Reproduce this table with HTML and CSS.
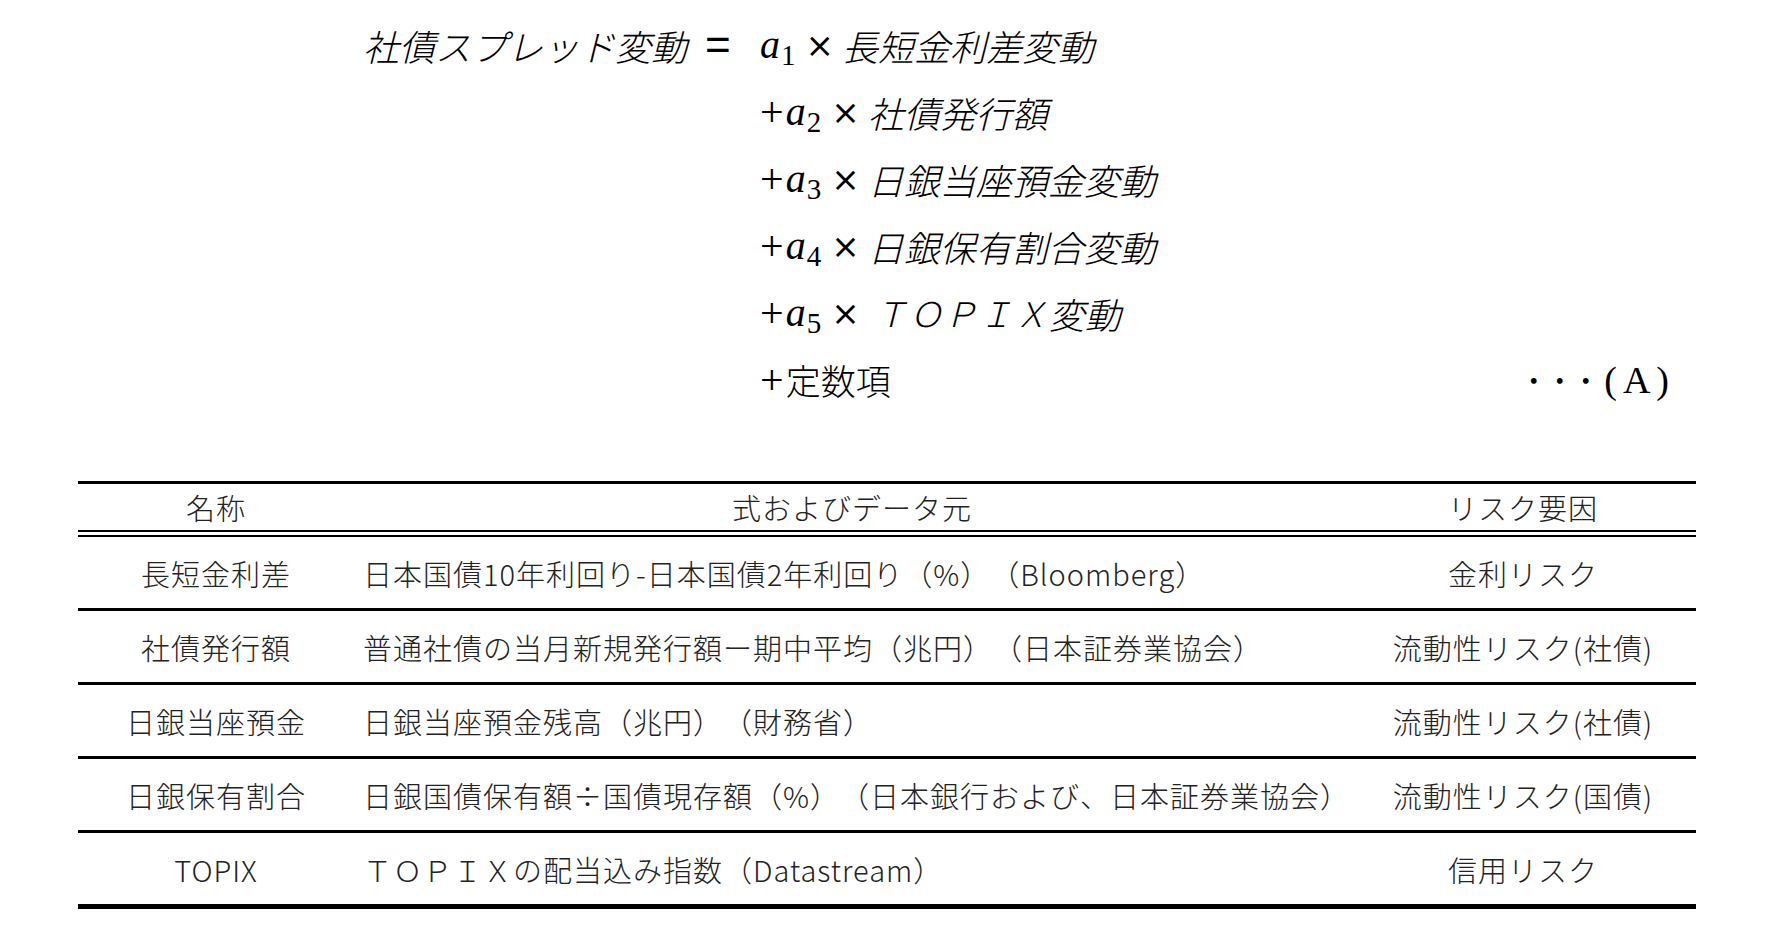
FILE: index.html
```html
<!DOCTYPE html>
<html lang="ja">
<head>
<meta charset="utf-8">
<link rel="stylesheet" href="styles.css">
</head>
<body>
<div class="page">
  <div class="formula">
    <div class="lhs"><span class="jp-it">社債スプレッド変動</span><span class="eq">=</span></div>
    <div class="term"><span class="mi">a</span><span class="sub">1</span><span class="times">×</span><span class="jp-it">長短金利差変動</span></div>
    <div class="term"><span class="op">+</span><span class="mi">a</span><span class="sub">2</span><span class="times">×</span><span class="jp-it">社債発行額</span></div>
    <div class="term"><span class="op">+</span><span class="mi">a</span><span class="sub">3</span><span class="times">×</span><span class="jp-it">日銀当座預金変動</span></div>
    <div class="term"><span class="op">+</span><span class="mi">a</span><span class="sub">4</span><span class="times">×</span><span class="jp-it">日銀保有割合変動</span></div>
    <div class="term"><span class="op">+</span><span class="mi">a</span><span class="sub">5</span><span class="times">×</span><span class="fw-it">ＴＯＰＩＸ</span><span class="jp-it">変動</span></div>
    <div class="term last"><span class="const"><span class="op">+</span><span class="jp">定数項</span></span><span class="eqno"><span class="dots">・・・</span><span class="tag">(A)</span></span></div>
  </div>

  <div class="tbl">
    <div class="row head">
      <div class="c1">名称</div>
      <div class="c2 center">式およびデータ元</div>
      <div class="c3">リスク要因</div>
    </div>
    <div class="row">
      <div class="c1">長短金利差</div>
      <div class="c2">日本国債10年利回り-日本国債2年利回り（%）（Bloomberg）</div>
      <div class="c3">金利リスク</div>
    </div>
    <div class="row">
      <div class="c1">社債発行額</div>
      <div class="c2">普通社債の当月新規発行額ー期中平均（兆円）（日本証券業協会）</div>
      <div class="c3">流動性リスク(社債)</div>
    </div>
    <div class="row">
      <div class="c1">日銀当座預金</div>
      <div class="c2">日銀当座預金残高（兆円）（財務省）</div>
      <div class="c3">流動性リスク(社債)</div>
    </div>
    <div class="row">
      <div class="c1">日銀保有割合</div>
      <div class="c2">日銀国債保有額÷国債現存額（%）（日本銀行および、日本証券業協会）</div>
      <div class="c3">流動性リスク(国債)</div>
    </div>
    <div class="row">
      <div class="c1">TOPIX</div>
      <div class="c2">ＴＯＰＩＸの配当込み指数（Datastream）</div>
      <div class="c3">信用リスク</div>
    </div>
  </div>
</div>
</body>
</html>
```

FILE: styles.css
```css
html, body {
  margin: 0;
  padding: 0;
  background: #ffffff;
}

.page {
  width: 1786px;
  height: 952px;
  overflow: hidden;
  color: #111;
  font-family: "Noto Sans CJK JP", "Noto Sans", sans-serif;
  text-spacing-trim: space-all;
}

/* ---------- formula ---------- */
.formula {
  margin-left: 363px;
  width: 1316px;
  padding-top: 11px;
  display: grid;
  grid-template-columns: 397px 1fr;
  grid-auto-rows: 67px;
  align-items: center;
  font-size: 36px;
  color: #000;
}

.lhs {
  grid-column: 1;
  grid-row: 1;
  display: flex;
  align-items: center;
}

.term {
  grid-column: 2;
  display: flex;
  align-items: center;
  white-space: nowrap;
}

.term.last {
  justify-content: space-between;
}

.jp-it {
  font-family: "Noto Sans CJK JP", sans-serif;
  font-weight: 300;
  font-style: italic;
  font-size: 36px;
}

.jp {
  font-family: "Noto Sans CJK JP", sans-serif;
  font-weight: 300;
  font-size: 35px;
}

.fw-it {
  font-family: "Noto Sans CJK JP", sans-serif;
  font-weight: 300;
  font-style: italic;
  font-size: 34px;
  letter-spacing: 1px;
  margin-left: 6px;
}

.eq {
  font-family: "Liberation Sans", sans-serif;
  font-size: 44px;
  margin-left: 18px;
}

.mi {
  font-family: "Liberation Serif", serif;
  font-style: italic;
  font-size: 40px;
}

.sub {
  font-family: "Liberation Serif", serif;
  font-size: 29px;
  position: relative;
  top: 11px;
  margin-left: 1px;
}

.op {
  font-family: "Liberation Serif", serif;
  font-size: 42px;
  margin-right: 2px;
}

.times {
  font-family: "DejaVu Sans", sans-serif;
  font-size: 34px;
  margin: 0 8px 0 10px;
}

.const {
  display: flex;
  align-items: center;
}

.eqno {
  display: flex;
  align-items: center;
  margin-right: 4px;
}

.dots {
  font-family: "Noto Sans CJK JP", sans-serif;
  font-size: 27px;
  letter-spacing: -1px;
}

.tag {
  font-family: "Liberation Serif", serif;
  font-size: 38px;
  letter-spacing: 6px;
  margin-left: 6px;
}

/* ---------- table ---------- */
.tbl {
  margin-top: 68px;
  margin-left: 78px;
  width: 1618px;
  border-top: 3px solid #000;
  border-bottom: 5px solid #000;
  font-size: 29px;
  font-weight: 300;
  letter-spacing: 1px;
  color: #222;
}

.row {
  display: grid;
  grid-template-columns: 276px 996px 346px;
  height: 71px;
  align-items: center;
  border-bottom: 3px solid #000;
}

.row:last-child {
  border-bottom: none;
}

.row.head {
  height: 46px;
  border-bottom: 7px double #000;
}

.c1 {
  text-align: center;
}

.c2 {
  padding-left: 9px;
  white-space: nowrap;
}

.c2.center {
  padding-left: 0;
  text-align: center;
}

.c3 {
  text-align: center;
  white-space: nowrap;
}
```
